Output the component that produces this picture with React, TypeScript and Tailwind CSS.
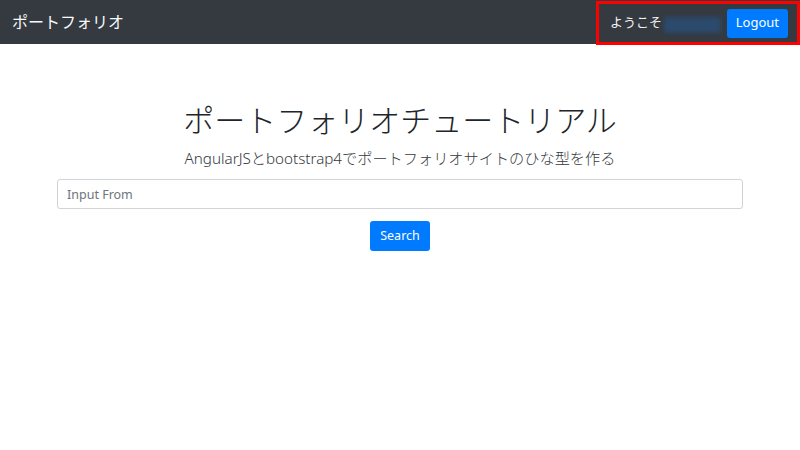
const font = {
  fontFamily: '"Noto Sans", "Noto Sans CJK JP", sans-serif',
};

const Navbar = () => {
  return (
    <nav className="flex h-[44px] items-center justify-between bg-[#343a40] pl-[12px]">
      <span className="text-[16px] text-[#f8f9fa]">ポートフォリオ</span>
      {/* highlighted user area */}
      <div className="mt-[2px] flex h-[44px] w-[204px] shrink-0 items-center border-[3px] border-[#ff0000] pl-[11px] pr-[9px]">
        <span className="shrink-0 whitespace-nowrap text-[13px] text-[#f2f2f2]">ようこそ</span>
        <span className="ml-[2px] mt-[3px] h-[16px] flex-1 rounded-[2px] bg-[#2b4a6c] blur-[2px]" />
        <button className="ml-[6px] h-[29px] shrink-0 rounded-[3px] bg-[#007bff] px-[9px] text-[13px] text-white">
          Logout
        </button>
      </div>
    </nav>
  );
};

export default function App() {
  return (
    <div className="min-h-[450px] w-[800px] bg-white" style={font}>
      <Navbar />
      <main className="flex flex-col items-center px-[57px] pt-[52px]">
        <h1 className="text-[31px] font-light leading-[48px] text-[#212529]">
          ポートフォリオチュートリアル
        </h1>
        <p className="mt-[2px] text-[15.2px] font-light leading-[24px] text-[#343a40]">
          AngularJSとbootstrap4でポートフォリオサイトのひな型を作る
        </p>
        <input
          className="mt-[9px] h-[30px] w-full rounded-[3px] border border-[#ced4da] px-[9px] text-[12.5px] text-[#495057] placeholder:text-[#6c757d]"
          placeholder="Input From"
        />
        <button className="mt-[12px] h-[30px] rounded-[3px] bg-[#007bff] px-[10px] text-[12.5px] text-white">
          Search
        </button>
      </main>
    </div>
  );
}
